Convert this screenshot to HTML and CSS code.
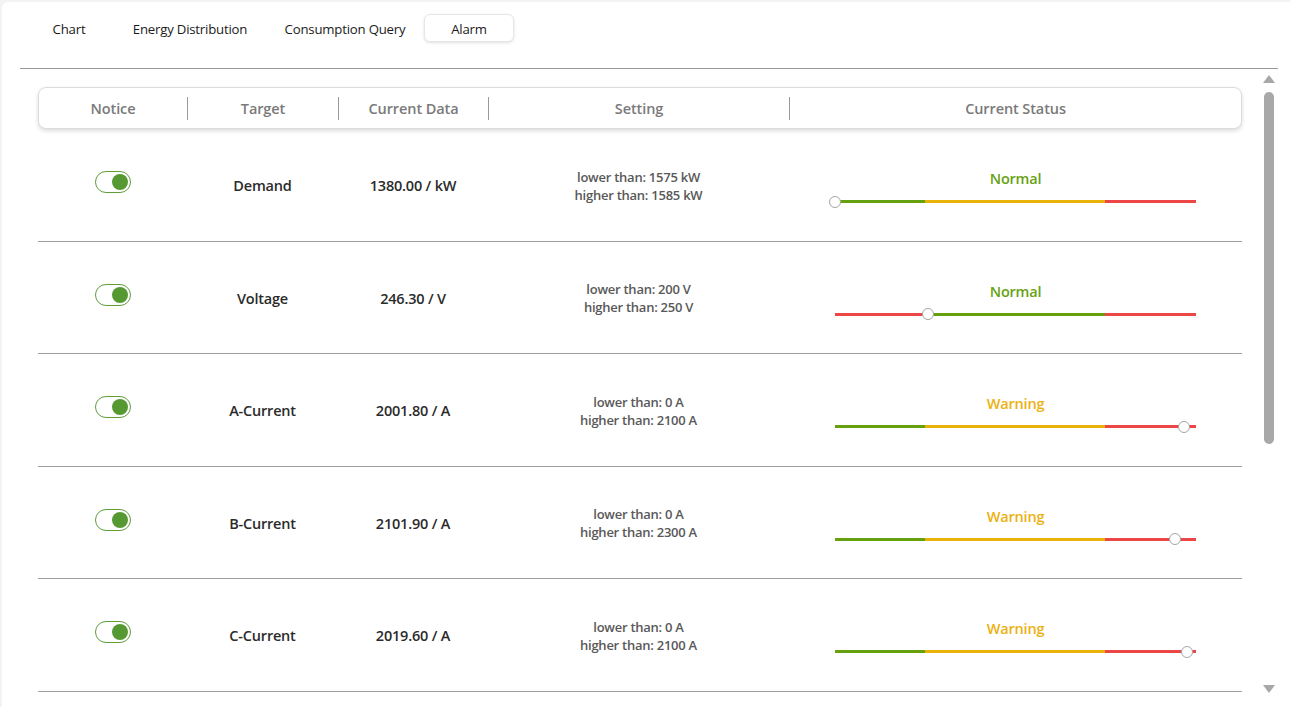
FILE: index.html
```html
<!DOCTYPE html>
<html>
<head>
<meta charset="utf-8">
<link rel="stylesheet" href="styles.css">
</head>
<body>
<div class="card">
  <div class="content">
    <nav class="tabs">
      <div class="tab w90">Chart</div>
      <div class="tab w152">Energy Distribution</div>
      <div class="tab w158">Consumption Query</div>
      <div class="tab w90 active">Alarm</div>
    </nav>
    <div class="panel">
      <div class="table">
        <div class="thead">
          <div class="th c1">Notice</div>
          <div class="th c2">Target</div>
          <div class="th c3">Current Data</div>
          <div class="th c4">Setting</div>
          <div class="th c5 last">Current Status</div>
        </div>
        <div class="rows">
          <div class="row">
            <div class="cell c1"><span class="toggle"><span class="knob"></span></span></div>
            <div class="cell c2 strong">Demand</div>
            <div class="cell c3 strong">1380.00 / kW</div>
            <div class="cell c4 setting"><span>lower than: 1575 kW</span><span>higher than: 1585 kW</span></div>
            <div class="cell c5 status">
              <span class="label normal">Normal</span>
              <div class="bar">
                <span class="seg green" style="width:90px"></span><span class="seg yellow" style="width:180px"></span><span class="seg red" style="width:91px"></span>
                <span class="dot" style="left:0px"></span>
              </div>
            </div>
          </div>
          <div class="row">
            <div class="cell c1"><span class="toggle"><span class="knob"></span></span></div>
            <div class="cell c2 strong">Voltage</div>
            <div class="cell c3 strong">246.30 / V</div>
            <div class="cell c4 setting"><span>lower than: 200 V</span><span>higher than: 250 V</span></div>
            <div class="cell c5 status">
              <span class="label normal">Normal</span>
              <div class="bar">
                <span class="seg red" style="width:93px"></span><span class="seg green" style="width:177px"></span><span class="seg red" style="width:91px"></span>
                <span class="dot" style="left:93px"></span>
              </div>
            </div>
          </div>
          <div class="row">
            <div class="cell c1"><span class="toggle"><span class="knob"></span></span></div>
            <div class="cell c2 strong">A-Current</div>
            <div class="cell c3 strong">2001.80 / A</div>
            <div class="cell c4 setting"><span>lower than: 0 A</span><span>higher than: 2100 A</span></div>
            <div class="cell c5 status">
              <span class="label warning">Warning</span>
              <div class="bar">
                <span class="seg green" style="width:90px"></span><span class="seg yellow" style="width:180px"></span><span class="seg red" style="width:91px"></span>
                <span class="dot" style="left:349px"></span>
              </div>
            </div>
          </div>
          <div class="row">
            <div class="cell c1"><span class="toggle"><span class="knob"></span></span></div>
            <div class="cell c2 strong">B-Current</div>
            <div class="cell c3 strong">2101.90 / A</div>
            <div class="cell c4 setting"><span>lower than: 0 A</span><span>higher than: 2300 A</span></div>
            <div class="cell c5 status">
              <span class="label warning">Warning</span>
              <div class="bar">
                <span class="seg green" style="width:90px"></span><span class="seg yellow" style="width:180px"></span><span class="seg red" style="width:91px"></span>
                <span class="dot" style="left:340px"></span>
              </div>
            </div>
          </div>
          <div class="row">
            <div class="cell c1"><span class="toggle"><span class="knob"></span></span></div>
            <div class="cell c2 strong">C-Current</div>
            <div class="cell c3 strong">2019.60 / A</div>
            <div class="cell c4 setting"><span>lower than: 0 A</span><span>higher than: 2100 A</span></div>
            <div class="cell c5 status">
              <span class="label warning">Warning</span>
              <div class="bar">
                <span class="seg green" style="width:90px"></span><span class="seg yellow" style="width:180px"></span><span class="seg red" style="width:91px"></span>
                <span class="dot" style="left:352px"></span>
              </div>
            </div>
          </div>
        </div>
      </div>
      <div class="scrollbar">
        <span class="arrow up"></span>
        <div class="track"><span class="thumb"></span></div>
        <span class="arrow down"></span>
      </div>
    </div>
  </div>
</div>
</body>
</html>
```
FILE: styles.css
```css
* { box-sizing: border-box; }
html, body { margin: 0; padding: 0; }
body {
  background: #f3f3f3;
  font-family: "Open Sans", "Noto Sans", sans-serif;
  color: #333;
  width: 1290px;
  height: 707px;
  overflow: hidden;
}
.card {
  margin: 2px 0 0 2px;
  width: 1288px;
  height: 705px;
  background: #fff;
  border-radius: 6px 0 0 0;
  overflow: hidden;
}
.content {
  margin: 0 12px 0 18px;
  height: 100%;
  display: flex;
  flex-direction: column;
}
.tabs {
  display: flex;
  padding: 12px 0 0 4px;
  height: 67px;
  border-bottom: 1px solid #9a9a9a;
}
.tab {
  height: 28px;
  display: flex;
  align-items: center;
  justify-content: center;
  font-size: 13.2px;
  color: #1a1a1a;
  letter-spacing: -0.2px;
  border: 1px solid transparent;
  border-radius: 6px;
  padding-top: 2px;
}
.w90 { width: 90px; }
.w152 { width: 152px; }
.w158 { width: 158px; }
.tab.active {
  background: #fff;
  border-color: #e6e6e6;
  box-shadow: 0 1px 3px rgba(0,0,0,0.12);
}
.panel {
  flex: 1;
  display: flex;
  min-height: 0;
}
.table {
  flex: 1;
  padding: 18px 20px 0 18px;
  overflow: hidden;
}
.thead {
  display: flex;
  align-items: center;
  height: 42px;
  border: 1px solid #dcdcdc;
  border-radius: 8px;
  box-shadow: 0 2px 4px rgba(0,0,0,0.14);
  background: #fff;
}
.c1 { width: 149px; }
.c2 { width: 151px; }
.c3 { width: 150px; }
.c4 { width: 301px; }
.c5 { flex: 1; }
.th {
  height: 23px;
  display: flex;
  align-items: center;
  justify-content: center;
  font-size: 14.5px;
  font-weight: 600;
  color: #7a7a7a;
  border-right: 1px solid #9a9a9a;
  letter-spacing: -0.1px;
}
.th.last { border-right: none; }
.row {
  display: flex;
  height: 112.5px;
  border-bottom: 1px solid #9e9e9e;
  align-items: center;
}
.cell {
  display: flex;
  align-items: center;
  justify-content: center;
  height: 100%;
}
.strong {
  font-size: 14.5px;
  font-weight: 600;
  color: #2b2b2b;
  letter-spacing: -0.2px;
  padding-top: 2px;
}
.setting {
  flex-direction: column;
  font-size: 13px;
  font-weight: 600;
  color: #595959;
  line-height: 18px;
  letter-spacing: -0.25px;
  padding-top: 2px;
}
.toggle {
  width: 36px;
  height: 22px;
  border: 1.5px solid #5e9e3b;
  border-radius: 11px;
  display: flex;
  align-items: center;
  justify-content: flex-end;
  padding-right: 2px;
  margin-top: -5px;
}
.knob {
  width: 16px;
  height: 16px;
  border-radius: 50%;
  background: #569933;
}
.status {
  flex-direction: column;
  gap: 11px;
  padding-top: 3px;
}
.label {
  font-size: 14.5px;
  font-weight: 600;
  line-height: 20px;
  letter-spacing: -0.2px;
}
.normal { color: #67a213; }
.warning { color: #ecb110; }
.bar {
  position: relative;
  width: 361px;
  height: 3px;
  display: flex;
}
.seg { height: 3px; display: block; }
.green { background: #65a10f; }
.yellow { background: #e9b209; }
.red { background: #ed4647; }
.dot {
  position: absolute;
  top: -4.5px;
  width: 12px;
  height: 12px;
  margin-left: -6px;
  border-radius: 50%;
  background: #fff;
  border: 1.5px solid #a5a5a5;
}
.scrollbar {
  width: 14px;
  margin-right: 2px;
  display: flex;
  flex-direction: column;
  align-items: center;
  padding: 6px 0 14px;
}
.arrow {
  width: 0;
  height: 0;
  border-left: 6px solid transparent;
  border-right: 6px solid transparent;
}
.arrow.up { border-bottom: 8px solid #a8a8a8; }
.arrow.down { border-top: 8px solid #a8a8a8; }
.track {
  flex: 1;
  width: 100%;
  padding: 9px 2px 0;
}
.thumb {
  display: block;
  width: 10px;
  height: 352px;
  border-radius: 5px;
  background: #a8a8a8;
}
```
